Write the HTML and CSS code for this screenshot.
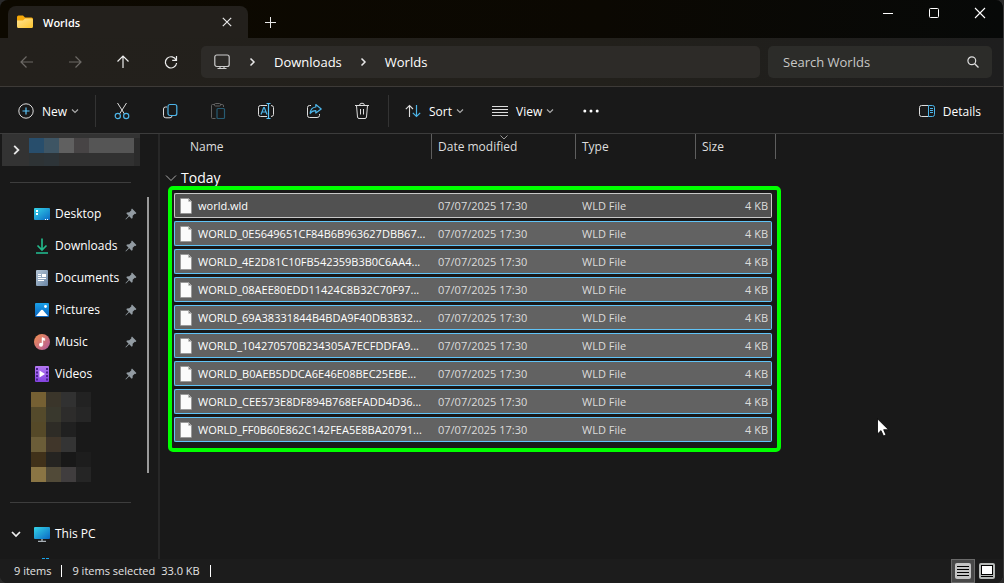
FILE: index.html
```
<!DOCTYPE html>
<html lang="en">
<head>
  <meta charset="UTF-8" />
  <meta name="viewport" content="width=device-width, initial-scale=1.0"/>
  <title>Worlds</title>
  <link rel="stylesheet" href="styles.css">
</head>
<body>
  <!-- shared icons -->
  <svg class="defs" width="0" height="0" aria-hidden="true">
    <defs>
      <linearGradient id="gFolder" x1="0" y1="0" x2="1" y2="1"><stop offset="0" stop-color="#ffe394"/><stop offset="1" stop-color="#fcc42e"/></linearGradient>
      <linearGradient id="gScreen" x1="0" y1="0" x2="1" y2="1"><stop offset="0" stop-color="#35d5e8"/><stop offset="1" stop-color="#0a68c4"/></linearGradient>
      <linearGradient id="gDoc" x1="0" y1="0" x2="1" y2="1"><stop offset="0" stop-color="#b4c5d6"/><stop offset="1" stop-color="#6a86a5"/></linearGradient>
      <linearGradient id="gPic" x1="0" y1="0" x2="0" y2="1"><stop offset="0" stop-color="#1aa0e8"/><stop offset="1" stop-color="#0a62bd"/></linearGradient>
      <linearGradient id="gMusic" x1="0" y1="0" x2="1" y2="1"><stop offset="0" stop-color="#f19150"/><stop offset="1" stop-color="#b0569d"/></linearGradient>
      <linearGradient id="gVideo" x1="0" y1="0" x2="0" y2="1"><stop offset="0" stop-color="#b478f2"/><stop offset="1" stop-color="#8443e0"/></linearGradient>
    </defs>
    <symbol id="chev" viewBox="0 0 8 8"><path d="M1 2.500l3 3 3-3" fill="none" stroke="#aaa" stroke-width="1.200"/></symbol>
    <symbol id="right" viewBox="0 0 10 10"><path d="M3.500 1.500L7 5 3.500 8.500" fill="none" stroke="#e8e8e8" stroke-width="1.500"/></symbol>
    <symbol id="pin" viewBox="0 0 12 12"><path d="M7 .6L11.400 5 10.600 5.900 9.800 5.700 7.700 7.800 7.600 10 6.700 10.700 4.200 8.300 1.200 11.300.5 11.500.7 10.700 3.600 7.700 1.300 5.300 2 4.400 4.300 4.300 6.400 2.200 6.200 1.400Z" fill="#929ba2"/></symbol>
    <symbol id="file" viewBox="0 0 12 16"><path d="M.5.500H8L11.500 4V15.500H.5Z" fill="#fbfbfb" stroke="#8c8c8c" stroke-width=".6"/><path d="M8.500.500V3.500H11.500Z" fill="#777" stroke="#ccc" stroke-width=".6"/></symbol>
  </svg>

  <div class="window">
    <header class="titlebar">
      <div class="tab">
        <svg width="16" height="14" viewBox="0 0 16 14"><path d="M0 2Q0 .5 1.500.500H6L8 2.500H14.500Q16 2.500 16 4V8H0Z" fill="#f5a809"/><path d="M0 5.500H6L8 3.500H14.500Q16 3.500 16 5V11.500Q16 13 14.500 13H1.500Q0 13 0 11.500Z" fill="url(#gFolder)"/></svg>
        <span class="tab-title">Worlds</span>
        <button class="tab-close" aria-label="Close tab"><svg width="10" height="10" viewBox="0 0 10 10"><path d="M.8.800L9.200 9.200M9.200.800L.8 9.200" stroke="#e8e8e8" stroke-width="1.200"/></svg></button>
      </div>
      <button class="tab-add" aria-label="New tab"><svg width="12" height="12" viewBox="0 0 12 12"><path d="M1 6.500H12M6.500 1V12" stroke="#e8e8e8"/></svg></button>
      <div class="caption">
        <button aria-label="Minimize"><svg width="12" height="12" viewBox="0 0 12 12"><path d="M1 6.500H11" stroke="#fff"/></svg></button>
        <button aria-label="Maximize"><svg width="12" height="12" viewBox="0 0 12 12"><rect x="1.500" y="1.500" width="9" height="9" rx="1" fill="none" stroke="#fff"/></svg></button>
        <button aria-label="Close"><svg width="12" height="12" viewBox="0 0 12 12"><path d="M1 1L11 11M11 1L1 11" stroke="#fff" stroke-width="1.100"/></svg></button>
      </div>
    </header>

    <div class="navbar">
      <div class="nav-buttons">
        <button class="dim" aria-label="Back" disabled><svg width="14" height="14" viewBox="0 0 14 14"><path d="M13 7H1M6.500 1.500L1 7 6.500 12.500"/></svg></button>
        <button class="dim" aria-label="Forward" disabled><svg width="14" height="14" viewBox="0 0 14 14"><path d="M1 7H13M7.500 1.500L13 7 7.500 12.500"/></svg></button>
        <button aria-label="Up"><svg width="14" height="14" viewBox="0 0 14 14"><path d="M7 13V1M1.500 6.500L7 1 12.500 6.500"/></svg></button>
        <button aria-label="Refresh"><svg width="14" height="14" viewBox="0 0 14 14"><path d="M12.200 5.200A5.600 5.600 0 1 0 12.600 8M12.500 1V5.300H8.200"/></svg></button>
      </div>
      <nav class="address" aria-label="Address">
        <svg class="pc" width="16" height="16" viewBox="0 0 16 16"><rect x=".8" y="1" width="14.400" height="11.500" rx="2" fill="none" stroke="#ccc" stroke-width="1.200"/><path d="M6 13V15M10 13V15M3.500 14.500H12.500" stroke="#ccc" stroke-width="1.200"/></svg>
        <svg width="10" height="10"><use href="#right"/></svg>
        <a href="#">Downloads</a>
        <svg width="10" height="10"><use href="#right"/></svg>
        <a href="#">Worlds</a>
      </nav>
      <div class="search">
        <input type="text" placeholder="Search Worlds" aria-label="Search Worlds">
        <svg width="12" height="12" viewBox="0 0 12 12"><circle cx="4.800" cy="4.800" r="3.900" fill="none" stroke="#ddd" stroke-width="1.200"/><path d="M7.700 7.700L11.500 11.500" stroke="#ddd" stroke-width="1.300"/></svg>
      </div>
    </div>

    <div class="toolbar">
      <button class="cmd new"><svg width="16" height="16" viewBox="0 0 16 16"><circle cx="8" cy="8" r="7.200" fill="none" stroke="#ddd"/><path d="M4.500 8H11.500M8 4.500V11.500" stroke="#5bc5fa" stroke-width="1.200"/></svg>New<svg class="chev" width="8" height="8"><use href="#chev"/></svg></button>
      <div class="icons">
        <button aria-label="Cut"><svg width="16" height="18" viewBox="0 0 16 18"><path d="M3.500 1L10.500 12M12.500 1L5.500 12" fill="none" stroke="#ddd"/><circle cx="3.800" cy="14" r="2.600" fill="none" stroke="#4cb4e8" stroke-width="1.200"/><circle cx="12.200" cy="14" r="2.600" fill="none" stroke="#4cb4e8" stroke-width="1.200"/></svg></button>
        <button aria-label="Copy"><svg width="16" height="16" viewBox="0 0 16 16"><path d="M5 4H3.500Q1.500 4 1.500 6V12.500Q1.500 14.800 3.800 14.800H8Q9.800 14.800 10 13" fill="none" stroke="#ddd"/><rect x="6" y="1.500" width="8.800" height="11" rx="2" fill="none" stroke="#4cb4e8" stroke-width="1.200"/></svg></button>
        <button aria-label="Paste" disabled><svg width="16" height="18" viewBox="0 0 16 18"><path d="M5 2.500H2.500Q1.500 2.500 1.500 3.500V15.500Q1.500 16.500 2.500 16.500H5.500M10 2.500H12.500Q13.500 2.500 13.500 4V5" fill="none" stroke="#626262"/><rect x="4.500" y="1.500" width="6" height="2.500" rx="1" fill="none" stroke="#626262"/><rect x="7" y="6.500" width="7.500" height="10" rx="1" fill="none" stroke="#275b72" stroke-width="1.200"/></svg></button>
        <button aria-label="Rename"><svg width="18" height="18" viewBox="0 0 18 18"><path d="M10 3.500H3.500Q1.500 3.500 1.500 5.500V12.500Q1.500 14.500 3.500 14.500H10M14 3.500Q16.500 3.500 16.500 5.500V12.500Q16.500 14.500 14 14.500" fill="none" stroke="#ddd"/><path d="M4 12.500L6.700 5.500H7.300L10 12.500M5 10H9" fill="none" stroke="#4cb4e8" stroke-width="1.200"/><path d="M11.500 1.500V16.500M9.500 1.500H13.500M9.500 16.500H13.500" stroke="#5bc5fa" stroke-width="1.200"/></svg></button>
        <button aria-label="Share"><svg width="16" height="16" viewBox="0 0 16 16"><path d="M5 2.500H3.500Q1.500 2.500 1.500 4.500V12.500Q1.500 14.500 3.500 14.500H11Q13.500 14.500 13.500 12.500V11" fill="none" stroke="#ddd"/><path d="M9.800 1.500L15.200 6 9.800 10V7.600Q6 7.500 4.200 10.500Q4.500 4.500 9.800 4Z" fill="none" stroke="#4cb4e8" stroke-width="1.200" stroke-linejoin="round"/></svg></button>
        <button aria-label="Delete"><svg width="16" height="18" viewBox="0 0 16 18"><path d="M1 3.500H15M5.500 3.500Q5.500 1.200 8 1.200T10.500 3.500M2.500 3.500L3.500 15Q3.700 16.500 5 16.500H11Q12.300 16.500 12.500 15L13.500 3.500M6.500 7V12.500M9.500 7V12.500" fill="none" stroke="#ddd"/></svg></button>
      </div>
      <button class="cmd sort"><svg width="16" height="14" viewBox="0 0 16 14"><path d="M4.500 13V1.500M.8 5.200L4.500 1.500 8 5" fill="none" stroke="#ddd" stroke-width="1.100"/><path d="M11.500 1V12.500M7.800 8.800L11.500 12.500 15.200 8.800" fill="none" stroke="#4cb4e8" stroke-width="1.200"/></svg>Sort<svg class="chev" width="8" height="8"><use href="#chev"/></svg></button>
      <button class="cmd view"><svg width="16" height="12" viewBox="0 0 16 12"><path d="M0 1.500H16M0 4.500H16M0 7.500H16M0 10.500H16" stroke="#ddd"/></svg>View<svg class="chev" width="8" height="8"><use href="#chev"/></svg></button>
      <button class="cmd" aria-label="See more"><svg width="16" height="4" viewBox="0 0 16 4"><circle cx="1.800" cy="2" r="1.500" fill="#fff"/><circle cx="8" cy="2" r="1.500" fill="#fff"/><circle cx="14.200" cy="2" r="1.500" fill="#fff"/></svg></button>
      <button class="cmd details"><svg width="16" height="12" viewBox="0 0 16 12"><path d="M9.500.500H2.500Q.5.500.5 2.500V9.500Q.5 11.500 2.500 11.500H9.500" fill="none" stroke="#ddd"/><path d="M9.500.500H13.500Q15.500.500 15.500 2.500V9.500Q15.500 11.500 13.500 11.500H9.500ZM11 3.500H14M11 5.500H14M11 7.500H14" fill="none" stroke="#4cb4e8"/></svg>Details</button>
    </div>

    <main class="content">
      <aside class="sidebar">
        <div class="root-item">
          <svg width="12" height="12"><use href="#right"/></svg>
          <svg class="mosaic" width="111" height="28" viewBox="0 0 111 28" shape-rendering="crispEdges">
            <rect width="15" height="15" fill="#284e6c"/><rect x="15" width="15" height="15" fill="#3e5564"/><rect x="30" width="15" height="15" fill="#606060"/><rect x="45" width="15" height="15" fill="#474445"/><rect x="60" width="45" height="15" fill="#555"/>
            <rect y="15" width="15" height="13" fill="#2e3335"/><rect x="15" y="15" width="15" height="13" fill="#2d3438"/><rect x="30" y="15" width="75" height="13" fill="#313131"/><rect x="105" width="6" height="28" fill="#2b2b2b"/>
          </svg>
        </div>
        <ul class="places">
          <li><svg width="16" height="16" viewBox="0 0 16 16"><rect y="2" width="16" height="12" rx="1" fill="url(#gScreen)"/><path d="M2 5H4M2 8H4" stroke="#fff" stroke-width="2"/><path d="M11 13.500H12M13 13.500H14" stroke="#fff"/></svg><a href="#">Desktop</a><svg class="pin" width="12" height="12"><use href="#pin"/></svg></li>
          <li><svg width="16" height="16" viewBox="0 0 16 16"><path d="M8 .5V12M3.500 7.500L8 12 12.500 7.500" fill="none" stroke="#23b88a" stroke-width="1.700"/><path d="M2 15H14" stroke="#22c095" stroke-width="1.600"/></svg><a href="#">Downloads</a><svg class="pin" width="12" height="12"><use href="#pin"/></svg></li>
          <li><svg width="16" height="16" viewBox="0 0 16 16"><rect x="2" width="12" height="16" rx="1" fill="url(#gDoc)"/><path d="M4 4.500H7M4 6.500H7M4 8.500H12M4 10.500H10" stroke="#fff"/><rect x="8" y="4" width="4" height="3" fill="#fff"/></svg><a href="#">Documents</a><svg class="pin" width="12" height="12"><use href="#pin"/></svg></li>
          <li><svg width="16" height="16" viewBox="0 0 16 16"><rect x="1" y="1" width="14" height="14" rx="1" fill="url(#gPic)"/><path d="M2 14L7.200 8Q8 7.300 8.800 8L14 14Z" fill="#fff"/><circle cx="11.500" cy="4.500" r="1.400" fill="#fff"/></svg><a href="#">Pictures</a><svg class="pin" width="12" height="12"><use href="#pin"/></svg></li>
          <li><svg width="16" height="16" viewBox="0 0 16 16"><circle cx="8" cy="8" r="8" fill="url(#gMusic)"/><path d="M8 10V3.500L10.800 4.500V6.500L8.800 6V11" fill="#fff" stroke="#fff" stroke-width=".5"/><circle cx="7" cy="10.800" r="2" fill="#fff"/></svg><a href="#">Music</a><svg class="pin" width="12" height="12"><use href="#pin"/></svg></li>
          <li><svg width="16" height="16" viewBox="0 0 16 16"><rect x="1" width="14" height="16" rx="1" fill="url(#gVideo)"/><path d="M3 2V4M3 5.500V7.500M3 9V11M3 12.500V14.500M13 2V4M13 5.500V7.500M13 9V11M13 12.500V14.500" stroke="#4a228f" stroke-width="2"/><path d="M5.500 4.500L11 8 5.500 11.500Z" fill="#fff"/></svg><a href="#">Videos</a><svg class="pin" width="12" height="12"><use href="#pin"/></svg></li>
        </ul>
        <svg class="blocks" width="60" height="90" viewBox="0 0 60 90" shape-rendering="crispEdges">
          <rect width="15" height="15" fill="#756033"/><rect x="15" width="15" height="15" fill="#3a352a"/><rect x="30" width="15" height="15" fill="#313131"/><rect x="45" width="15" height="15" fill="#222"/>
          <rect y="15" width="15" height="15" fill="#544a2b"/><rect x="15" y="15" width="15" height="15" fill="#39382d"/><rect x="30" y="15" width="15" height="15" fill="#2d2c2b"/><rect x="45" y="15" width="15" height="15" fill="#262626"/>
          <rect y="30" width="15" height="15" fill="#554928"/><rect x="15" y="30" width="15" height="15" fill="#2e2c26"/><rect x="30" y="30" width="15" height="15" fill="#202020"/>
          <rect y="45" width="15" height="15" fill="#6b5d38"/><rect x="15" y="45" width="15" height="15" fill="#40362a"/><rect x="30" y="45" width="15" height="15" fill="#343434"/>
          <rect y="60" width="15" height="15" fill="#40311a"/><rect x="15" y="60" width="15" height="15" fill="#252421"/><rect x="30" y="60" width="15" height="15" fill="#181818"/><rect x="45" y="60" width="15" height="15" fill="#1d1d1d"/>
          <rect y="75" width="15" height="15" fill="#8a7544"/><rect x="15" y="75" width="15" height="15" fill="#514a38"/><rect x="30" y="75" width="15" height="15" fill="#403d3e"/><rect x="45" y="75" width="15" height="15" fill="#252525"/>
        </svg>
        <div class="this-pc">
          <svg width="12" height="10" viewBox="0 0 12 10"><path d="M2 3L6 7 10 3" fill="none" stroke="#eee" stroke-width="1.700"/></svg>
          <svg width="16" height="16" viewBox="0 0 16 16"><rect y="1" width="16" height="12" rx="1" fill="url(#gScreen)"/><path d="M8 13V15M4 15.500H12" stroke="#a8b0b6" stroke-width="1.400"/></svg>
          <a href="#">This PC</a>
        </div>
        <svg class="drive" width="16" height="16" viewBox="0 0 16 16"><path d="M8 0H11V3H8ZM12 0H15V3H12Z" fill="#1aa5ea"/><rect y="7" width="16" height="5" fill="#9aa3aa"/></svg>
        <div class="scrollbar"></div>
      </aside>

      <section class="files">
        <table>
          <colgroup><col class="c-name"><col class="c-date"><col class="c-type"><col class="c-size"><col class="c-end"></colgroup>
          <thead>
            <tr><th>Name</th><th>Date modified<svg class="sorted" width="8" height="5" viewBox="0 0 8 5"><path d="M.5.500L4 4 7.500.500" fill="none" stroke="#999"/></svg></th><th>Type</th><th colspan="2">Size</th></tr>
          </thead>
          <tbody>
            <tr class="group"><td colspan="5"><button><svg width="12" height="8" viewBox="0 0 12 8"><path d="M1 1.500L6 6.500 11 1.500" fill="none" stroke="#aaa"/></svg>Today</button></td></tr>
            <tr class="item focused"><td><svg width="12" height="16"><use href="#file"/></svg>world.wld</td><td>07/07/2025 17:30</td><td>WLD File</td><td>4 KB</td></tr>
            <tr class="item"><td><svg width="12" height="16"><use href="#file"/></svg>WORLD_0E5649651CF84B6B963627DBB67...</td><td>07/07/2025 17:30</td><td>WLD File</td><td>4 KB</td></tr>
            <tr class="item"><td><svg width="12" height="16"><use href="#file"/></svg>WORLD_4E2D81C10FB542359B3B0C6AA4...</td><td>07/07/2025 17:30</td><td>WLD File</td><td>4 KB</td></tr>
            <tr class="item"><td><svg width="12" height="16"><use href="#file"/></svg>WORLD_08AEE80EDD11424C8B32C70F97...</td><td>07/07/2025 17:30</td><td>WLD File</td><td>4 KB</td></tr>
            <tr class="item"><td><svg width="12" height="16"><use href="#file"/></svg>WORLD_69A38331844B4BDA9F40DB3B32...</td><td>07/07/2025 17:30</td><td>WLD File</td><td>4 KB</td></tr>
            <tr class="item"><td><svg width="12" height="16"><use href="#file"/></svg>WORLD_104270570B234305A7ECFDDFA9...</td><td>07/07/2025 17:30</td><td>WLD File</td><td>4 KB</td></tr>
            <tr class="item"><td><svg width="12" height="16"><use href="#file"/></svg>WORLD_B0AEB5DDCA6E46E08BEC25EBE...</td><td>07/07/2025 17:30</td><td>WLD File</td><td>4 KB</td></tr>
            <tr class="item"><td><svg width="12" height="16"><use href="#file"/></svg>WORLD_CEE573E8DF894B768EFADD4D36...</td><td>07/07/2025 17:30</td><td>WLD File</td><td>4 KB</td></tr>
            <tr class="item"><td><svg width="12" height="16"><use href="#file"/></svg>WORLD_FF0B60E862C142FEA5E8BA20791...</td><td>07/07/2025 17:30</td><td>WLD File</td><td>4 KB</td></tr>
          </tbody>
        </table>
        <div class="highlight"></div>
        <svg class="cursor" width="12" height="19" viewBox="0 0 12 19"><path d="M.5.800V16L4 12.600 6.500 18 9 17 6.700 11.700H11.500Z" fill="#fff" stroke="#000" stroke-width=".8"/></svg>
      </section>
    </main>

    <footer class="statusbar">
      <span class="count">9 items</span>
      <span class="selected">9 items selected</span>
      <span class="size">33.0 KB</span>
      <div class="layouts">
        <button class="active" aria-label="Details view"><svg width="16" height="16" viewBox="0 0 16 16"><rect width="16" height="16" rx="2" fill="#c4c4c4"/><path d="M2 3.500H14M2 6.500H14M2 9.500H14M2 12.500H14" stroke="#000"/></svg></button>
        <button aria-label="Large icons"><svg width="16" height="16" viewBox="0 0 16 16"><rect width="16" height="16" rx="2" fill="#b5b8b6"/><rect x="2.500" y="2.500" width="11" height="9" fill="#fff" stroke="#000"/><path d="M2 13.500H14" stroke="#000"/></svg></button>
      </div>
    </footer>
  </div>
</body>
</html>
```
FILE: styles.css
```
* {
  box-sizing: border-box;
}
body {
  margin: 0;
  background: #2a2a2a;
  color: #fff;
  font-family: "Open Sans", "Noto Sans", sans-serif;
  font-size: 12px;
}
button {
  background: none;
  border: 0;
  padding: 0;
  color: inherit;
  font: inherit;
  display: flex;
  align-items: center;
  justify-content: center;
}
a {
  color: inherit;
  text-decoration: none;
}
svg {
  display: block;
  flex: none;
}
.defs {
  position: absolute;
}
.window {
  display: flex;
  flex-direction: column;
  height: 100vh;
  background: #191919;
  border-right: 1px solid #383838;
  border-radius: 8px;
  overflow: hidden;
}

/* title bar */
.titlebar {
  display: flex;
  height: 38px;
  flex: none;
  padding-left: 8px;
  background: linear-gradient(90deg, #0d0900, #0b0802 60%, #070908);
}
.tab {
  display: flex;
  align-items: center;
  width: 240px;
  margin-top: 6px;
  padding: 0 16px 0 9px;
  background: #23201c;
  border-radius: 8px 8px 0 0;
}
.tab-title {
  margin-left: 10px;
  font-size: 11px;
  font-weight: 600;
}
.tab-close {
  margin-left: auto;
}
.tab-add {
  width: 44px;
  margin-top: 6px;
}
.caption {
  display: flex;
  height: 26px;
  margin-left: auto;
}
.caption button {
  width: 46px;
}

/* navigation row */
.navbar {
  display: flex;
  align-items: center;
  height: 49px;
  flex: none;
  padding: 0 11px 0 3px;
  background: linear-gradient(90deg, #23201c, #22201b 60%, #1e1e1e);
  border-bottom: 1px solid #3d3a37;
}
.nav-buttons {
  display: flex;
  margin-right: 6px;
}
.nav-buttons button {
  width: 48px;
  height: 32px;
}
.nav-buttons path {
  fill: none;
  stroke: #ececec;
  stroke-width: 1.2;
}
.nav-buttons .dim path {
  stroke: #6c6965;
}
.address {
  display: flex;
  align-items: center;
  flex: 1;
  height: 32px;
  padding-left: 13px;
  background: #2d2b28;
  border-radius: 5px;
  font-size: 13px;
}
.address a {
  margin: 0 16px 0 17px;
}
.address .pc {
  margin-right: 17px;
}
.search {
  display: flex;
  align-items: center;
  width: 224px;
  height: 32px;
  margin-left: 8px;
  padding: 0 13px 0 15px;
  background: #2c2c29;
  border-radius: 5px;
}
.search input {
  flex: 1;
  min-width: 0;
  padding: 0;
  background: none;
  border: 0;
  color: #fff;
  font: inherit;
  font-size: 13px;
}
.search input::placeholder {
  color: #c8c8c6;
}

/* command bar */
.toolbar {
  display: flex;
  align-items: center;
  height: 47px;
  flex: none;
  padding: 2px 22px 0 18px;
  border-bottom: 1px solid #3c3c3c;
}
.cmd {
  gap: 8px;
  justify-content: flex-start;
}
.cmd .chev {
  margin-left: -4px;
}
.new {
  width: 77px;
}
.icons {
  display: flex;
  padding: 0 2px;
  border: solid #333;
  border-width: 0 1px;
}
.icons button {
  width: 48px;
  height: 32px;
}
.sort {
  width: 87px;
  margin-left: 16px;
}
.view {
  width: 91px;
}
.details {
  margin-left: auto;
}

/* main area */
.content {
  display: flex;
  flex: 1;
  min-height: 0;
}
.sidebar {
  position: relative;
  width: 160px;
  flex: none;
  padding-left: 2px;
  border-right: 2px solid #272727;
  overflow: hidden;
}
.root-item {
  display: flex;
  align-items: center;
  width: 138px;
  height: 32px;
  padding-left: 8px;
  background: #333;
}
.root-item .mosaic {
  align-self: flex-end;
  margin-left: 7px;
}
.places {
  width: 121px;
  margin: 16px 0 2px 8px;
  padding: 15px 0 0;
  border-top: 1px solid #3d3d3d;
  list-style: none;
}
.places li {
  display: flex;
  align-items: center;
  height: 32px;
  margin-right: -6px;
  padding-left: 24px;
}
.places a,
.this-pc a {
  margin-left: 5px;
  padding-bottom: 2px;
}
.pin {
  margin-left: auto;
}
.blocks {
  margin: 0 0 20px 29px;
}
.this-pc {
  display: flex;
  align-items: center;
  width: 121px;
  height: 48px;
  margin-left: 8px;
  padding-top: 15px;
  border-top: 1px solid #3d3d3d;
}
.this-pc svg + svg {
  margin-left: 12px;
}
.drive {
  margin: 8px 0 0 32px;
}
.scrollbar {
  position: absolute;
  top: 63px;
  right: 9px;
  width: 2px;
  height: 276px;
  background: #9a9a9a;
}
.files {
  position: relative;
  flex: 1;
  min-width: 0;
  padding-left: 14px;
}
table {
  width: 602px;
  table-layout: fixed;
  border-collapse: separate;
  border-spacing: 0 3px;
  margin-top: -3px;
}
.c-name { width: 258px; }
.c-date { width: 144px; }
.c-type { width: 120px; }
.c-size { width: 76px; }
.c-end { width: 4px; }
th {
  position: relative;
  height: 25px;
  padding: 0 6px;
  border-right: 1px solid #5e5e5e;
  color: #dedede;
  font-weight: normal;
  text-align: left;
}
th:first-child {
  padding-left: 16px;
}
.sorted {
  position: absolute;
  top: 1px;
  left: 68px;
}
.group td {
  height: 28px;
  padding: 0;
}
.group button {
  gap: 4px;
  margin-left: -9px;
  padding-top: 4px;
  font-size: 14px;
  line-height: 20px;
}
.item td {
  height: 25px;
  padding: 0 6px;
  background: #626262;
  border: 1px solid #60c4f8;
  border-width: 1px 0;
  color: #dcdcdc;
  font-size: 11px;
  line-height: 16px;
  white-space: nowrap;
}
.item td:first-child {
  border-left-width: 1px;
  border-radius: 2px 0 0 2px;
  padding: 0 0 0 5px;
  color: #fff;
}
.item td:last-child {
  border-right-width: 1px;
  border-radius: 0 2px 2px 0;
  padding-right: 3px;
  text-align: right;
}
.item.focused td {
  background: #515151;
  border-color: #c8c8c8;
}
.item svg {
  display: inline-block;
  margin-right: 6px;
  vertical-align: top;
}
.highlight {
  position: absolute;
  top: 52px;
  left: 8px;
  width: 613px;
  height: 266px;
  border: 4px solid #00ff00;
  border-radius: 5px;
}
.cursor {
  position: absolute;
  top: 284px;
  left: 717px;
}

/* status bar */
.statusbar {
  display: flex;
  align-items: center;
  height: 24px;
  flex: none;
  padding: 0 4px 0 14px;
  background: #1c1c1c;
  color: #e4e4e4;
  font-size: 11px;
  line-height: 12px;
}
.count,
.size {
  padding-right: 10px;
  border-right: 1px solid #fff;
}
.selected {
  margin: 0 6px 0 10px;
}
.layouts {
  display: flex;
  margin-left: auto;
}
.layouts button {
  width: 24px;
  height: 24px;
}
.layouts .active {
  background: #484848;
  border: 1px solid #6a6a6a;
}
```
